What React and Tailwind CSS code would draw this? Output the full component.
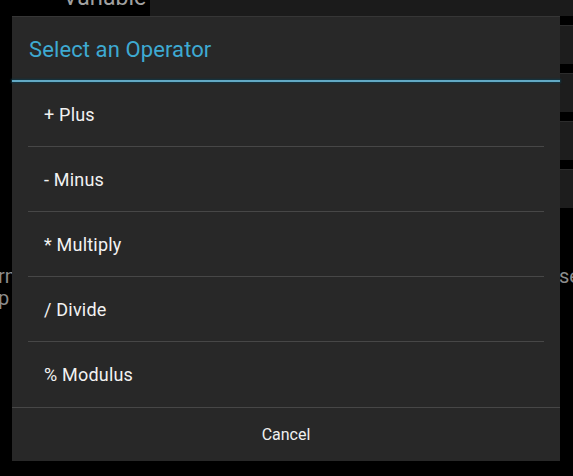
const operators = ['+ Plus', '- Minus', '* Multiply', '/ Divide', '% Modulus']

// dimmed screen behind the dialog
function Backdrop() {
  return (
    <>
      <div className="absolute left-[150px] top-0 h-4 w-[423px] bg-[#1b1b1b]" />
      <div className="absolute left-[63px] top-[-15px] text-[23px] leading-[26px] text-[#a0a0a0]">Variable</div>
      <div className="absolute left-[440px] top-[25px] flex w-[140px] flex-col gap-[9px]">
        {[0, 1, 2, 3].map((i) => (
          <div key={i} className="h-[39px] border-t border-[#2c2c2c] bg-[#1d1d1d]" />
        ))}
      </div>
      <div className="absolute left-[-2px] top-[265px] text-[20px] leading-[22px] text-[#8c8c8c]">
        <div>rm</div>
        <div>p</div>
      </div>
      <div className="absolute left-[559px] top-[265px] text-[20px] leading-[22px] text-[#8c8c8c]">se</div>
    </>
  )
}

export default function App() {
  return (
    <div className="relative h-[476px] w-[573px] overflow-hidden bg-black font-['Roboto',sans-serif]">
      <Backdrop />

      <div className="absolute left-[12px] top-[16px] flex w-[548px] flex-col border-t border-[#363636] bg-[#282828]">
        <div className="flex h-[63px] items-center pl-[17px] pt-[2px] text-[22px] tracking-[0.1px] text-[#3eaad2]">
          Select an Operator
        </div>
        <div className="h-[2px] bg-[#62a9c4] shadow-[0_0_2px_1px_#123744]" />

        <div className="px-4">
          {operators.map((op, i) => (
            <div
              key={op}
              className={
                i < operators.length - 1
                  ? 'flex h-[65px] items-center border-b border-[#474747] pl-4 text-[18px] tracking-[0.2px] text-[#f2f2f2]'
                  : 'flex h-[65px] items-center pl-4 text-[18px] tracking-[0.2px] text-[#f2f2f2]'
              }
            >
              {op}
            </div>
          ))}
        </div>

        <div className="h-px bg-[#474747]" />
        <div className="flex h-[53px] items-center justify-center text-[16px] text-[#f0f0f0]">Cancel</div>
      </div>
    </div>
  )
}
